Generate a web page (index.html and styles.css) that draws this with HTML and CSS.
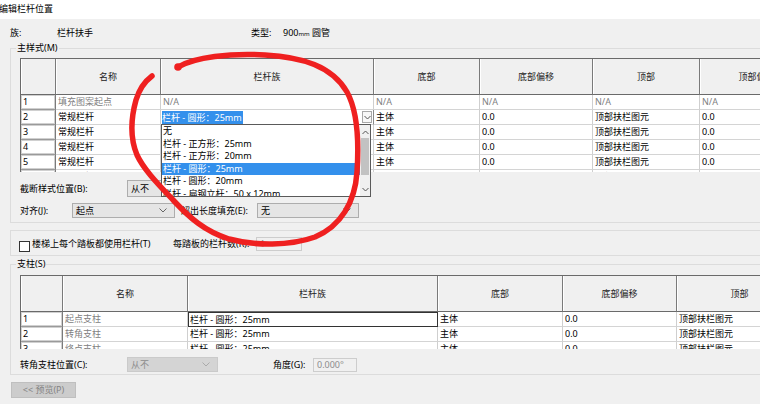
FILE: index.html
```html
<!DOCTYPE html>
<html lang="zh-CN">
<head>
<meta charset="utf-8">
<title>编辑栏杆位置</title>
<link rel="stylesheet" href="styles.css">
</head>
<body>
<div class="titlebar">编辑栏杆位置</div>
<div class="dialog">
  <div class="info">
    <span>族:</span><span>栏杆扶手</span><span>类型:</span><span>900<small>mm</small> 圆管</span>
  </div>

  <section class="group g-main">
    <div class="group-title">主样式(M)</div>
    <div class="table-wrap t-main">
      <div class="grid cols-main">
        <div class="th"></div><div class="th">名称</div><div class="th">栏杆族</div><div class="th">底部</div><div class="th">底部偏移</div><div class="th">顶部</div><div class="th">顶部偏移</div>

        <div class="td idx">1</div><div class="td dim">填充图案起点</div><div class="td dim">N/A</div><div class="td dim">N/A</div><div class="td dim">N/A</div><div class="td dim">N/A</div><div class="td dim">N/A</div>

        <div class="td idx">2</div><div class="td">常规栏杆</div>
        <div class="td combo-cell"><span class="sel">栏杆 - 圆形：25mm</span><span class="drop-btn"><svg width="7" height="5" viewBox="0 0 7 5"><path d="M0.5 1 L3.5 4 L6.5 1" fill="none" stroke="#555" stroke-width="1"/></svg></span></div>
        <div class="td">主体</div><div class="td">0.0</div><div class="td">顶部扶栏图元</div><div class="td">0.0</div>

        <div class="td idx">3</div><div class="td">常规栏杆</div><div class="td">栏杆 - 圆形：25mm</div><div class="td">主体</div><div class="td">0.0</div><div class="td">顶部扶栏图元</div><div class="td">0.0</div>
        <div class="td idx">4</div><div class="td">常规栏杆</div><div class="td">栏杆 - 圆形：25mm</div><div class="td">主体</div><div class="td">0.0</div><div class="td">顶部扶栏图元</div><div class="td">0.0</div>
        <div class="td idx">5</div><div class="td">常规栏杆</div><div class="td">栏杆 - 圆形：25mm</div><div class="td">主体</div><div class="td">0.0</div><div class="td">顶部扶栏图元</div><div class="td">0.0</div>
        <div class="td idx">6</div><div class="td">常规栏杆</div><div class="td">栏杆 - 圆形：25mm</div><div class="td">主体</div><div class="td">0.0</div><div class="td">顶部扶栏图元</div><div class="td">0.0</div>
      </div>
    </div>

    <div class="form-row r-break">
      <span class="lbl w-107">截断样式位置(B):</span>
      <span class="combo w-break">从不<svg class="chev" width="8" height="5" viewBox="0 0 8 5"><path d="M0.5 0.5 L4 4 L7.5 0.5" fill="none" stroke="#666" stroke-width="1"/></svg></span>
    </div>
    <div class="form-row r-align">
      <span class="lbl w-52">对齐(J):</span>
      <span class="combo w-103">起点<svg class="chev" width="8" height="5" viewBox="0 0 8 5"><path d="M0.5 0.5 L4 4 L7.5 0.5" fill="none" stroke="#666" stroke-width="1"/></svg></span>
      <span class="lbl w-76 ml-6">超出长度填充(E):</span>
      <span class="combo w-102">无<svg class="chev" width="8" height="5" viewBox="0 0 8 5"><path d="M0.5 0.5 L4 4 L7.5 0.5" fill="none" stroke="#666" stroke-width="1"/></svg></span>
    </div>
  </section>

  <section class="group g-tread">
    <div class="form-row r-tread">
      <span class="checkbox"></span>
      <span class="lbl w-141">楼梯上每个踏板都使用栏杆(T)</span>
      <span class="lbl w-83">每踏板的栏杆数(R):</span>
      <span class="input dis w-46">1</span>
    </div>
  </section>

  <section class="group g-posts">
    <div class="group-title">支柱(S)</div>
    <div class="table-wrap t-posts">
      <div class="grid cols-posts">
        <div class="th"></div><div class="th">名称</div><div class="th">栏杆族</div><div class="th">底部</div><div class="th">底部偏移</div><div class="th">顶部</div>

        <div class="td idx">1</div><div class="td dim">起点支柱</div><div class="td focus">栏杆 - 圆形：25mm</div><div class="td">主体</div><div class="td">0.0</div><div class="td">顶部扶栏图元</div>
        <div class="td idx">2</div><div class="td dim">转角支柱</div><div class="td">栏杆 - 圆形：25mm</div><div class="td">主体</div><div class="td">0.0</div><div class="td">顶部扶栏图元</div>
        <div class="td idx">3</div><div class="td dim">终点支柱</div><div class="td">栏杆 - 圆形：25mm</div><div class="td">主体</div><div class="td">0.0</div><div class="td">顶部扶栏图元</div>
      </div>
    </div>
    <div class="form-row r-corner">
      <span class="lbl w-107">转角支柱位置(C):</span>
      <span class="combo dis w-91">从不<svg class="chev" width="8" height="5" viewBox="0 0 8 5"><path d="M0.5 0.5 L4 4 L7.5 0.5" fill="none" stroke="#aaa" stroke-width="1"/></svg></span>
      <span class="lbl w-40 ml-55">角度(G):</span>
      <span class="input dis w-44">0.000°</span>
    </div>
  </section>

  <button class="btn-preview" disabled>&lt;&lt; 预览(P)</button>
</div>

<div class="dropdown">
  <ul class="options">
    <li>无</li>
    <li>栏杆 - 正方形：25mm</li>
    <li>栏杆 - 正方形：20mm</li>
    <li class="active">栏杆 - 圆形：25mm</li>
    <li>栏杆 - 圆形：20mm</li>
    <li>栏杆 - 扁钢立杆：50 x 12mm</li>
  </ul>
  <div class="scrollbar">
    <svg class="sb-arrow" width="7" height="5" viewBox="0 0 7 5"><path d="M0.5 4 L3.5 1 L6.5 4" fill="none" stroke="#555" stroke-width="1"/></svg>
    <div class="sb-thumb"></div>
    <svg class="sb-arrow sb-down" width="7" height="5" viewBox="0 0 7 5"><path d="M0.5 1 L3.5 4 L6.5 1" fill="none" stroke="#555" stroke-width="1"/></svg>
  </div>
</div>

<svg class="annotation" width="760" height="404" viewBox="0 0 760 404">
  <path d="M178,67 C195,57 230,53 265,55 C302,57 332,66 347,92 C358,112 359,142 357,172 C355,202 341,226 315,237 C290,246 255,246 229,239 C204,231 189,217 174,201 C159,185 144,170 137,155 C130,138 131,118 136,100 C139,90 144,82 152,76" fill="none" stroke="#ef2020" stroke-width="5.5" stroke-linecap="round" stroke-linejoin="round"/>
  <circle cx="178" cy="67" r="3.8" fill="#ef2020"/>
</svg>
</body>
</html>
```

FILE: styles.css
```css
html, body {
  margin: 0;
  padding: 0;
}
body {
  width: 760px;
  height: 404px;
  overflow: hidden;
  position: relative;
  background: #f0f0f0;
  font-family: "Noto Sans", "Noto Sans CJK SC", sans-serif;
  font-size: 9px;
  line-height: 14px;
  color: #000;
}

.titlebar {
  height: 19px;
  line-height: 17px;
  background: #fff;
  margin-left: -1px;
}

.info {
  display: grid;
  grid-template-columns: 47px 194px 32px auto;
  height: 28px;
  line-height: 28px;
  padding-left: 10px;
}
.info small {
  font-size: 6px;
}

.group {
  margin-left: 10px;
  width: 760px;
  border: 1px solid #dcdcdc;
  border-right: 0;
  padding-left: 9px;
}
.group-title {
  width: fit-content;
  margin: -7px 0 0 -4px;
  padding: 0 1px;
  line-height: 12px;
  background: #f0f0f0;
}
.g-main {
  margin-top: 1px;
  padding-bottom: 4px;
}
.g-tread {
  margin-top: 7px;
  padding-top: 6px;
  padding-bottom: 4px;
}
.g-posts {
  margin-top: 8px;
  padding-bottom: 2px;
}

.table-wrap {
  width: 740px;
  overflow: hidden;
  border-left: 1px solid #6a6a6a;
  border-top: 1px solid #6a6a6a;
  background: #fff;
}
.t-main {
  margin-top: 4px;
  height: 113px;
}
.t-posts {
  margin-top: 5px;
  height: 73px;
}

.grid {
  display: grid;
  grid-template-rows: 36px;
  grid-auto-rows: 15px;
}
.cols-main {
  grid-template-columns: 35px 105px 213px 106px 113px 107px 114px;
}
.cols-posts {
  grid-template-columns: 42px 125px 250px 125px 114px 126px;
}

.th, .td {
  box-sizing: border-box;
  white-space: nowrap;
  overflow: hidden;
}
.th {
  background: #f0f0f0;
  border-right: 1px solid #7a7a7a;
  border-bottom: 1px solid #6a6a6a;
  box-shadow: inset 1px 0 0 #ffffff;
  display: flex;
  align-items: center;
  justify-content: center;
  color: #222;
}
.td {
  background: #fff;
  border-right: 1px solid #cfcfcf;
  border-bottom: 1px solid #d4d4d4;
  padding-left: 2px;
  line-height: 14px;
}
.td.idx {
  border-right: 1px solid #7a7a7a;
  border-bottom: 1px solid #9a9a9a;
  box-shadow: inset 0 0 0 1px #d0d0d0;
  padding-left: 2px;
}
.td.dim {
  color: #808080;
}
.td.focus {
  border: 1px solid #333;
  padding-left: 1px;
  line-height: 13px;
}

.combo-cell {
  display: flex;
  justify-content: space-between;
  align-items: center;
  padding-left: 1px;
  border-right-color: #8a8a8a;
}
.sel {
  background: #3390ec;
  color: #fff;
  line-height: 13px;
  padding-right: 1px;
}
.drop-btn {
  width: 10px;
  height: 12px;
  box-sizing: border-box;
  border: 1px solid #a8a8a8;
  background: #f7f7f7;
  display: flex;
  align-items: center;
  justify-content: center;
  margin-right: 1px;
}

.form-row {
  display: flex;
  align-items: center;
}
.r-break {
  margin-top: 8px;
  height: 17px;
}
.r-align {
  margin-top: 6px;
  height: 15px;
}
.r-tread {
  height: 14px;
}
.r-corner {
  margin-top: 8px;
  height: 15px;
}

.lbl {
  flex: none;
  white-space: nowrap;
  line-height: 14px;
}
.w-107 { width: 107px; }
.w-52 { width: 52px; }
.w-76 { width: 76px; }
.w-141 { width: 141px; }
.w-83 { width: 83px; }
.w-40 { width: 40px; }
.ml-6 { margin-left: 6px; }
.ml-55 { margin-left: 55px; }

.combo {
  flex: none;
  box-sizing: border-box;
  height: 100%;
  border: 1px solid #adadad;
  background: #e5e5e5;
  display: flex;
  align-items: center;
  justify-content: space-between;
  padding: 0 7px 0 3px;
  line-height: 13px;
}
.combo.dis {
  background: #d4d4d4;
  border-color: #cacaca;
  color: #8c8c8c;
}
.w-break { width: 110px; }
.w-103 { width: 103px; }
.w-102 { width: 102px; }
.w-91 { width: 91px; }

.input {
  flex: none;
  box-sizing: border-box;
  height: 14px;
  border: 1px solid #cdcdcd;
  background: #f0f0f0;
  color: #8c8c8c;
  padding-left: 3px;
  line-height: 12px;
}
.w-46 { width: 46px; }
.w-44 { width: 44px; height: 14px; }

.checkbox {
  flex: none;
  width: 11px;
  height: 11px;
  box-sizing: border-box;
  border: 1px solid #333;
  background: #fff;
  margin: 4px 2px 0 -1px;
}

.btn-preview {
  display: block;
  margin: 7px 0 0 11px;
  width: 65px;
  height: 16px;
  padding: 0;
  box-sizing: border-box;
  border: 1px solid #bfbfbf;
  background: #cccccc;
  color: #838383;
  font: inherit;
  line-height: 14px;
  text-align: center;
}

.dropdown {
  position: absolute;
  left: 161px;
  top: 124px;
  width: 210px;
  height: 73px;
  box-sizing: border-box;
  border: 1px solid #5a5a5a;
  background: #fff;
  display: flex;
  overflow: hidden;
}
.options {
  list-style: none;
  margin: 0;
  padding: 0;
  flex: 1;
}
.options li {
  height: 12.5px;
  line-height: 12.5px;
  padding-left: 1px;
  white-space: nowrap;
}
.options li.active {
  background: #3390ec;
  color: #fff;
}
.scrollbar {
  width: 10px;
  background: #f0f0f0;
  display: flex;
  flex-direction: column;
  align-items: center;
  padding-top: 5px;
}
.sb-thumb {
  width: 8px;
  height: 37px;
  margin-top: 3px;
  background: #c2c2c2;
}
.sb-down {
  margin-top: auto;
  margin-bottom: 4px;
}

.annotation {
  position: absolute;
  left: 0;
  top: 0;
  pointer-events: none;
}
```
